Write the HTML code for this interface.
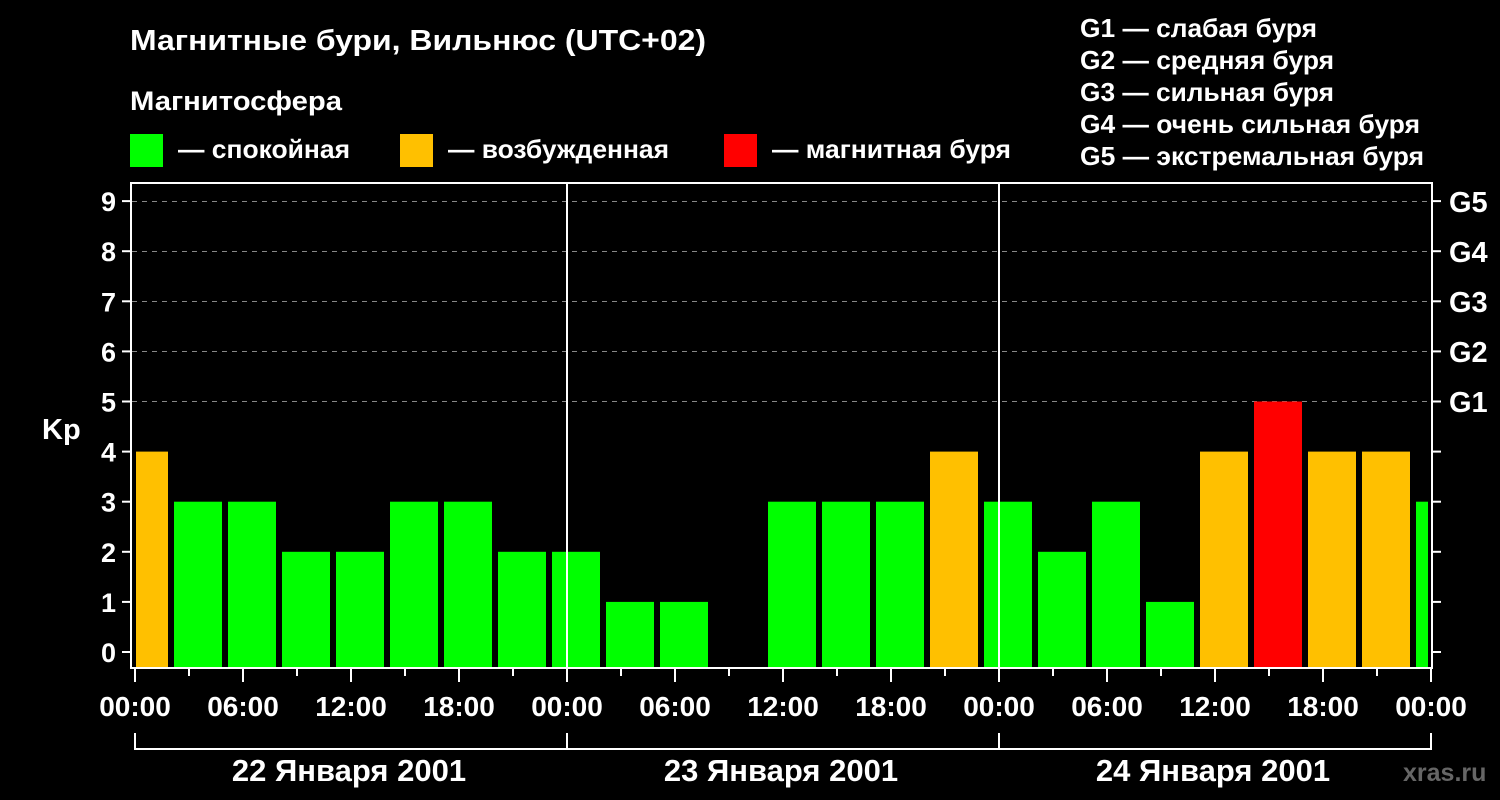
<!DOCTYPE html><html><head><meta charset="utf-8"><style>body{margin:0;background:#000}svg{display:block}text{font-family:"Liberation Sans",sans-serif;font-weight:bold;fill:#fff}</style></head><body>
<svg width="1500" height="800" xmlns="http://www.w3.org/2000/svg">
<rect width="1500" height="800" fill="#000"/>
<text x="130" y="50" font-size="29" textLength="576" lengthAdjust="spacingAndGlyphs">Магнитные бури, Вильнюс (UTC+02)</text>
<text x="130" y="110" font-size="27" textLength="212" lengthAdjust="spacingAndGlyphs">Магнитосфера</text>
<rect x="130" y="134" width="33" height="33" fill="#00ff00"/><text x="178" y="158" font-size="26" textLength="172" lengthAdjust="spacingAndGlyphs">— спокойная</text>
<rect x="400" y="134" width="33" height="33" fill="#ffc000"/><text x="448" y="158" font-size="26" textLength="221" lengthAdjust="spacingAndGlyphs">— возбужденная</text>
<rect x="724" y="134" width="33" height="33" fill="#ff0000"/><text x="772" y="158" font-size="26" textLength="239" lengthAdjust="spacingAndGlyphs">— магнитная буря</text>
<g font-size="26"><text x="1080" y="37" textLength="237" lengthAdjust="spacingAndGlyphs">G1 — слабая буря</text><text x="1080" y="69" textLength="254" lengthAdjust="spacingAndGlyphs">G2 — средняя буря</text><text x="1080" y="101" textLength="254" lengthAdjust="spacingAndGlyphs">G3 — сильная буря</text><text x="1080" y="133" textLength="340" lengthAdjust="spacingAndGlyphs">G4 — очень сильная буря</text><text x="1080" y="165" textLength="344" lengthAdjust="spacingAndGlyphs">G5 — экстремальная буря</text></g>
<g stroke="#888" stroke-dasharray="5,5" stroke-width="1">
<line x1="132" x2="1432" y1="201.5" y2="201.5"/><line x1="132" x2="1432" y1="251.5" y2="251.5"/><line x1="132" x2="1432" y1="301.5" y2="301.5"/><line x1="132" x2="1432" y1="351.5" y2="351.5"/><line x1="132" x2="1432" y1="401.5" y2="401.5"/></g>
<g id="bars"></g>
<g stroke="#fff" stroke-width="2" fill="none">
<rect x="131" y="183" width="1301" height="485"/>
<line x1="567" y1="183" x2="567" y2="682"/><line x1="999" y1="183" x2="999" y2="682"/>
<path d="M135 733V749H1431V733M567 733V749M999 733V749"/>
</g>
<g stroke="#fff" stroke-width="2" id="ticks"></g>
<g font-size="27" text-anchor="end" id="ylab"></g>
<g font-size="29" id="glab"><text x="1449" y="212">G5</text><text x="1449" y="262">G4</text><text x="1449" y="312">G3</text><text x="1449" y="362">G2</text><text x="1449" y="412">G1</text></g>
<text x="42" y="439" font-size="29">Kp</text>
<g font-size="28" text-anchor="middle"><text x="135" y="716">00:00</text><text x="243" y="716">06:00</text><text x="351" y="716">12:00</text><text x="459" y="716">18:00</text><text x="567" y="716">00:00</text><text x="675" y="716">06:00</text><text x="783" y="716">12:00</text><text x="891" y="716">18:00</text><text x="999" y="716">00:00</text><text x="1107" y="716">06:00</text><text x="1215" y="716">12:00</text><text x="1323" y="716">18:00</text><text x="1431" y="716">00:00</text>
<text x="349" y="781" font-size="31">22 Января 2001</text><text x="781" y="781" font-size="31">23 Января 2001</text><text x="1213" y="781" font-size="31">24 Января 2001</text></g>
<text x="1403" y="781" font-size="25" text-anchor="start" style="fill:#666">xras.ru</text>
</svg>
<script>
var v=[4,3,3,2,2,3,3,2,2,1,1,0,3,3,3,4,3,2,3,1,4,5,4,4,3],ns="http://www.w3.org/2000/svg",b=document.getElementById('bars');
v.forEach(function(k,i){if(!k)return;var c=144+54*i,x1=Math.max(c-24,136),x2=Math.min(c+24,1428);var r=document.createElementNS(ns,'rect');var top=652-50.1*k;r.setAttribute('x',x1);r.setAttribute('y',top);r.setAttribute('width',x2-x1);r.setAttribute('height',667-top);r.setAttribute('fill',k>=5?'#ff0000':k==4?'#ffc000':'#00ff00');b.appendChild(r);});
var t=document.getElementById('ticks'),yl=document.getElementById('ylab');
for(var k=0;k<=9;k++){var y=652-50.1*k;var l=document.createElementNS(ns,'line');l.setAttribute('x1',122);l.setAttribute('x2',131);l.setAttribute('y1',y);l.setAttribute('y2',y);t.appendChild(l);
var l2=document.createElementNS(ns,'line');l2.setAttribute('x1',1432);l2.setAttribute('x2',1441);l2.setAttribute('y1',y);l2.setAttribute('y2',y);t.appendChild(l2);
var tx=document.createElementNS(ns,'text');tx.setAttribute('x',116);tx.setAttribute('y',y+10);tx.textContent=k;yl.appendChild(tx);}
for(var i=0;i<=24;i++){var x=135+54*i;var l=document.createElementNS(ns,'line');l.setAttribute('x1',x);l.setAttribute('x2',x);l.setAttribute('y1',668);l.setAttribute('y2',i%2?676:682);t.appendChild(l);}
</script>
</body></html>
